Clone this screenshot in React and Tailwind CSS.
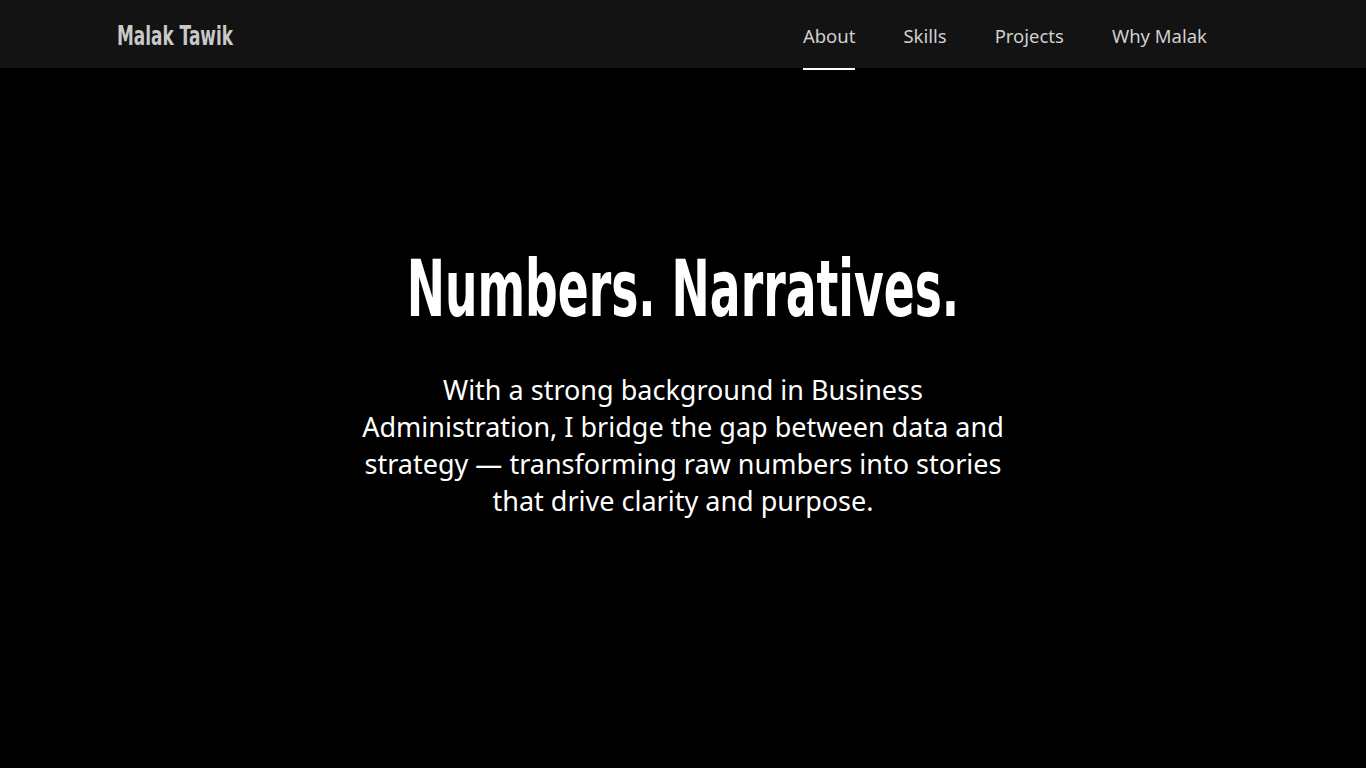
const links = ['About', 'Skills', 'Projects', 'Why Malak'];

const App = () => {
    return (
        <div className="min-h-screen bg-black text-white" style={{ fontFamily: '"Noto Sans", sans-serif' }}>
            <header className="h-[68px] bg-[#131313]">
                <div className="mx-auto flex h-full w-[1132px] items-center justify-between">
                    {/* condensed display font isn't installed, so squeeze DejaVu */}
                    <a className="origin-left scale-x-[0.65] pt-1 text-[26px] font-bold whitespace-nowrap text-[#c9c9c9] [font-family:'DejaVu_Sans',sans-serif]">
                        Malak Tawik
                    </a>
                    <nav className="flex h-full items-center gap-12 pr-[42px] pt-1">
                        {links.map((link, i) => (
                            <a key={link} className="relative flex h-full items-center text-[18.5px] text-[#cfcfcf]">
                                {link}
                                {i === 0 && <span className="absolute bottom-[-2px] left-0 right-0 h-[2px] bg-white"></span>}
                            </a>
                        ))}
                    </nav>
                </div>
            </header>
            <main className="flex flex-col items-center pt-[182px]">
                <h1 className="scale-x-[0.578] text-[79px] font-bold leading-none whitespace-nowrap [font-family:'DejaVu_Sans',sans-serif]">
                    Numbers. Narratives.
                </h1>
                <p className="mt-[42px] max-w-[650px] text-center text-[27px] leading-[37px]">
                    With a strong background in Business Administration, I bridge the gap between data and strategy — transforming raw numbers into stories that drive clarity and purpose.
                </p>
            </main>
        </div>
    );
};

export default App;
